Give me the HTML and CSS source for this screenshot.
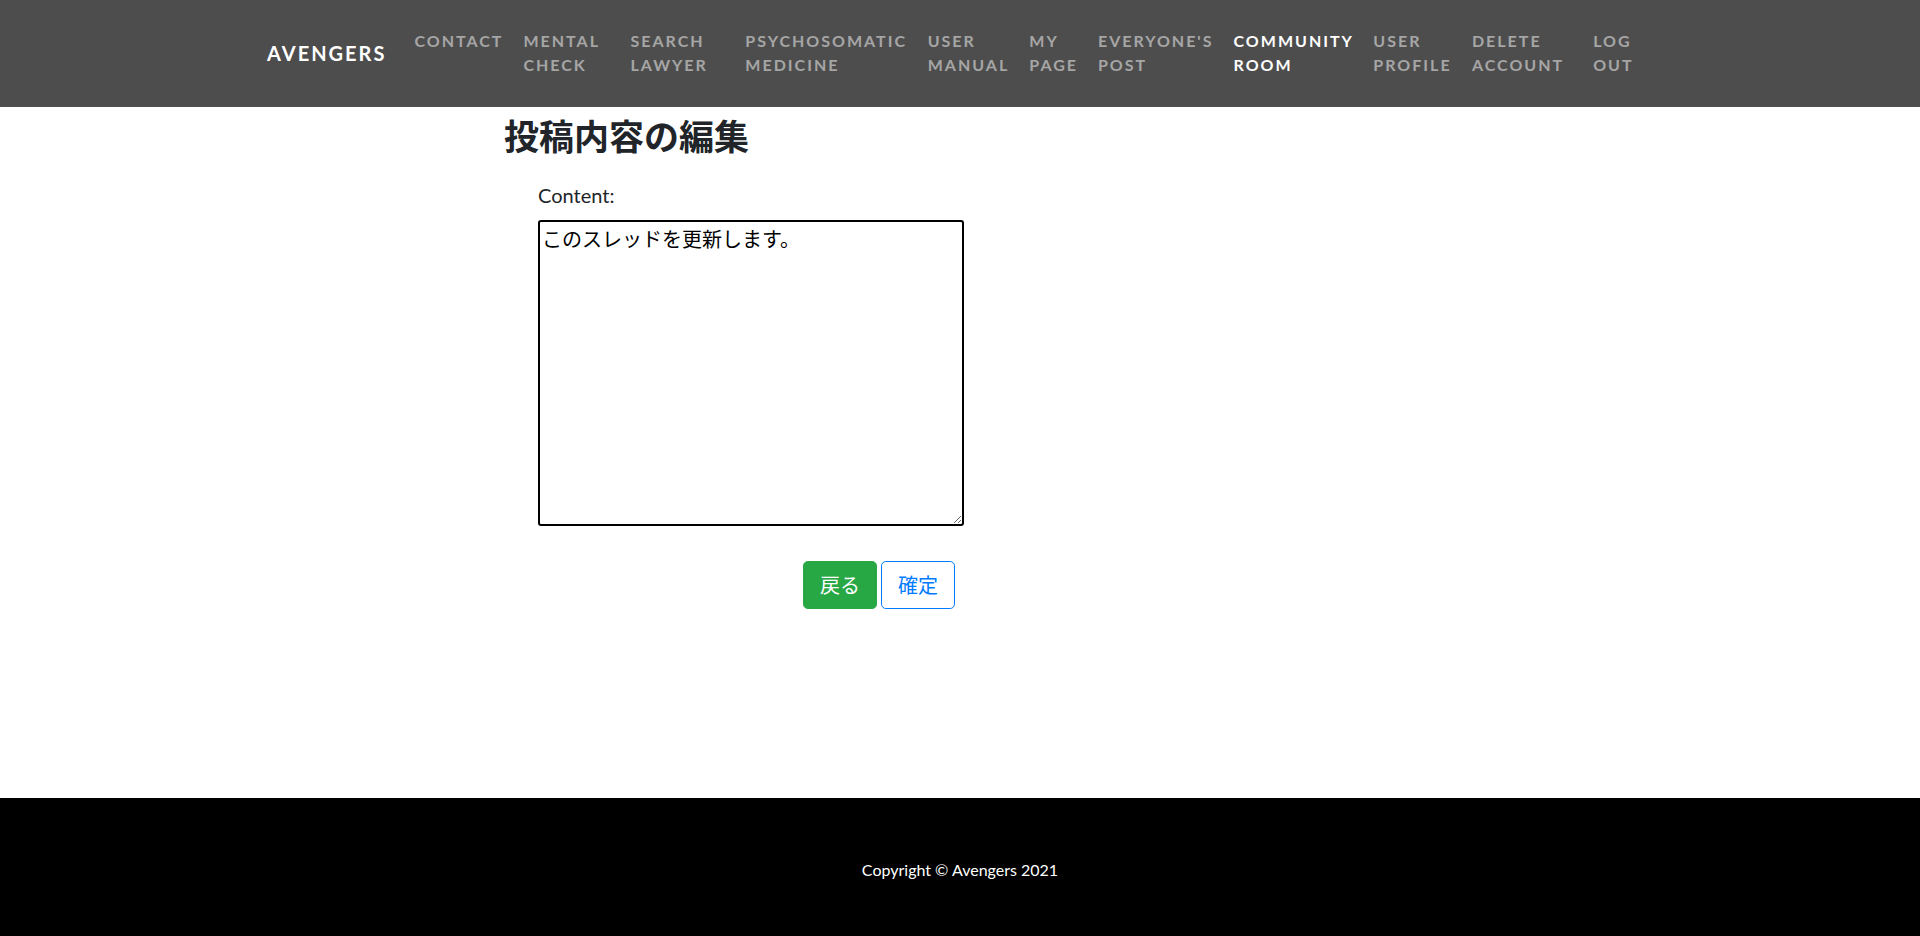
FILE: index.html
```html
<!DOCTYPE html>
<html lang="ja">
<head>
<meta charset="utf-8">
<title>投稿内容の編集</title>
<link rel="stylesheet" href="styles.css">
</head>
<body>
<nav class="navbar">
  <div class="nav-inner">
    <a class="brand" href="#">AVENGERS</a>
    <ul class="nav-list">
      <li class="nav-item"><a class="nav-link" href="#">Contact</a></li>
      <li class="nav-item"><a class="nav-link" href="#">Mental Check</a></li>
      <li class="nav-item"><a class="nav-link" href="#">Search Lawyer</a></li>
      <li class="nav-item"><a class="nav-link" href="#">Psychosomatic Medicine</a></li>
      <li class="nav-item"><a class="nav-link" href="#">User Manual</a></li>
      <li class="nav-item"><a class="nav-link" href="#">My Page</a></li>
      <li class="nav-item"><a class="nav-link" href="#">Everyone's Post</a></li>
      <li class="nav-item"><a class="nav-link active" href="#">Community Room</a></li>
      <li class="nav-item"><a class="nav-link" href="#">User Profile</a></li>
      <li class="nav-item"><a class="nav-link" href="#">Delete Account</a></li>
      <li class="nav-item"><a class="nav-link" href="#">Log Out</a></li>
    </ul>
  </div>
</nav>
<main class="main">
  <div class="container">
    <h2 class="page-title">投稿内容の編集</h2>
    <form class="edit-form">
      <label class="field-label" for="content">Content:</label>
      <textarea class="content-input" id="content" name="content">このスレッドを更新します。</textarea>
      <div class="actions">
        <a class="btn btn-success" href="#">戻る</a>
        <button class="btn btn-outline" type="submit">確定</button>
      </div>
    </form>
  </div>
</main>
<footer class="footer">
  <p class="copyright">Copyright © Avengers 2021</p>
</footer>
</body>
</html>
```
FILE: styles.css
```css
* { box-sizing: border-box; }

html, body { margin: 0; padding: 0; }

body {
  font-family: Lato, "Noto Sans CJK JP", sans-serif;
  font-size: 16px;
  line-height: 1.5;
  color: #212529;
  background: #fff;
  min-height: 100vh;
  display: flex;
  flex-direction: column;
}

/* NAVBAR */
.navbar {
  background: #4d4d4d;
  height: 107px;
  padding-bottom: 2px;
  display: flex;
  align-items: center;
}

.nav-inner {
  width: 1386px;
  margin: 0 auto;
  display: flex;
  align-items: center;
}

.brand {
  font-family: Lato, sans-serif;
  font-weight: 700;
  font-size: 20px;
  letter-spacing: 2px;
  color: #fff;
  text-decoration: none;
  text-transform: uppercase;
  margin-right: 18px;
  white-space: nowrap;
  flex: none;
}

.nav-list {
  list-style: none;
  margin: 0;
  padding: 0 2px 0 0;
  display: flex;
  flex: 1 1 auto;
  min-width: 0;
}

.nav-item {
  flex: 0 1 auto;
}

.nav-link {
  display: block;
  padding: 0 10px;
  font-family: Lato, sans-serif;
  font-weight: 700;
  font-size: 16px;
  line-height: 24px;
  letter-spacing: 2px;
  text-transform: uppercase;
  color: rgba(255, 255, 255, 0.5);
  text-decoration: none;
}

.nav-link.active { color: #fff; }

/* MAIN */
.main { flex: 1 0 auto; }

.container {
  width: 920px;
  margin: 0 auto;
}

.page-title {
  font-family: "Noto Sans CJK JP", sans-serif;
  font-size: 35px;
  font-weight: 700;
  line-height: 42px;
  margin: 7px 0 0 4px;
  color: #212529;
}

.edit-form {
  width: 426px;
  margin: 25px 0 0 38px;
  display: flex;
  flex-direction: column;
}

.field-label {
  font-family: Lato, sans-serif;
  font-size: 20px;
  line-height: 28px;
  color: #212529;
  margin-bottom: 11px;
}

.content-input {
  width: 426px;
  height: 306px;
  border: 2px solid #000;
  border-radius: 3px;
  padding: 2px;
  font-family: "Noto Sans CJK JP", sans-serif;
  font-size: 20px;
  color: #000;
  background: #fff;
  outline: none;
}

.actions {
  display: flex;
  justify-content: flex-end;
  gap: 4px;
  margin-top: 35px;
  padding-right: 9px;
}

.btn {
  display: inline-block;
  font-family: "Noto Sans CJK JP", sans-serif;
  font-size: 20px;
  line-height: 30px;
  height: 48px;
  padding: 8px 16px;
  border: 1px solid transparent;
  border-radius: 4.8px;
  text-decoration: none;
  cursor: pointer;
}

.btn-success {
  background: #28a745;
  border-color: #28a745;
  color: #fff;
}

.btn-outline {
  background: #fff;
  border-color: #007bff;
  color: #007bff;
}

/* FOOTER */
.footer {
  background: #000;
  height: 138px;
  flex: none;
  padding-top: 60px;
}

.copyright {
  margin: 0;
  text-align: center;
  font-family: Lato, sans-serif;
  font-size: 16px;
  line-height: 24px;
  color: #fff;
}
```
